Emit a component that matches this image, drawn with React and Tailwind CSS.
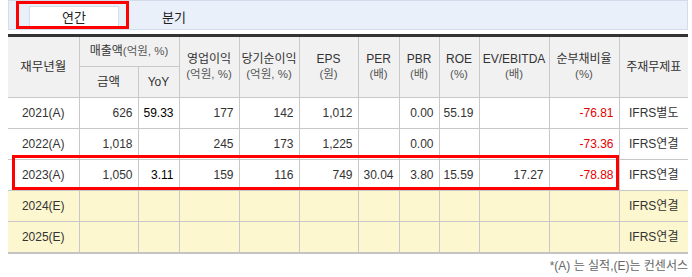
import React from "react";

const widths = [71, 59, 41, 60, 60, 59, 41, 40, 40, 70, 70, 69];

const rows = [
  { y: "2021(A)", v: ["626", "59.33", "177", "142", "1,012", "", "0.00", "55.19", "", "-76.81"], s: "IFRS별도" },
  { y: "2022(A)", v: ["1,018", "", "245", "173", "1,225", "", "0.00", "", "", "-73.36"], s: "IFRS연결" },
  { y: "2023(A)", v: ["1,050", "3.11", "159", "116", "749", "30.04", "3.80", "15.59", "17.27", "-78.88"], s: "IFRS연결", hl: true },
  { y: "2024(E)", v: ["", "", "", "", "", "", "", "", "", ""], s: "IFRS연결", est: true },
  { y: "2025(E)", v: ["", "", "", "", "", "", "", "", "", ""], s: "IFRS연결", est: true },
];

const font = { fontFamily: "'Liberation Sans', 'Noto Sans CJK KR', sans-serif" };

function H2({ a, b }) {
  return (
    <th rowSpan={2} className="border border-[#c8c8c8] font-normal text-[12px] leading-[15px] text-[#333] align-middle text-center px-0 whitespace-nowrap">
      <div>{a}</div>
      <div className="text-[11.5px] text-[#555]">{b}</div>
    </th>
  );
}

export default function App() {
  return (
    <div className="w-[692px] h-[277px] bg-white relative" style={font}>
      <div className="ml-[8px] w-[680px] h-[30px] bg-[#e9f0fa] border border-[#d3dcea] flex items-end pl-[20px] gap-[10px] relative">
        <div className="w-[90px] h-[23px] bg-white border-l border-t border-r border-[#d3dcea] flex items-center justify-center text-[13px] text-[#222]">연간</div>
        <div className="w-[90px] h-[23px] flex items-center justify-center text-[13px] text-[#222]">분기</div>
        <div className="absolute left-[7px] top-0 w-[113px] h-[28px] border-[3px] border-[#f00]" />
      </div>
      <div className="relative mt-[4px] ml-[8px] w-[680px]">
        <table className="table-fixed border-collapse w-[680px] border-t-[3px] border-t-[#333] border-b-2 border-b-[#c4c4c4]">
          <colgroup>
            {widths.map((w, i) => (
              <col key={i} style={{ width: w }} />
            ))}
          </colgroup>
          <thead className="bg-[#f1f1f1]">
            <tr className="h-[31px]">
              <th rowSpan={2} className="border-b border-r border-[#c8c8c8] font-normal text-[12.5px] text-[#333]">재무년월</th>
              <th colSpan={2} className="border border-[#c8c8c8] font-normal text-[12px] text-[#333] whitespace-nowrap">
                매출액<span className="text-[11.5px] text-[#555]">(억원, %)</span>
              </th>
              <H2 a="영업이익" b="(억원, %)" />
              <H2 a="당기순이익" b="(억원, %)" />
              <H2 a="EPS" b="(원)" />
              <H2 a="PER" b="(배)" />
              <H2 a="PBR" b="(배)" />
              <H2 a="ROE" b="(%)" />
              <H2 a="EV/EBITDA" b="(배)" />
              <H2 a="순부채비율" b="(%)" />
              <th rowSpan={2} className="border-b border-l border-[#c8c8c8] font-normal text-[12px] text-[#333] whitespace-nowrap">주재무제표</th>
            </tr>
            <tr className="h-[31px]">
              <th className="border border-[#c8c8c8] font-normal text-[12.5px] text-[#333]">금액</th>
              <th className="border border-[#c8c8c8] font-normal text-[12px] text-[#333]">YoY</th>
            </tr>
          </thead>
          <tbody>
            {rows.map((r, ri) => (
              <tr key={ri} className={"h-[31px] " + (r.est ? "bg-[#fdf7d0]" : "bg-white")}>
                <td className="border-t border-r border-[#c8c8c8] text-center text-[12px] text-[#333]">{r.y}</td>
                {r.v.map((v, i) => (
                  <td
                    key={i}
                    className={
                      "border border-[#c8c8c8] text-right pr-[5px] text-[12px] " +
                      (i === 9 ? "text-[#e60000]" : i === 1 ? "text-black" : "text-[#333]")
                    }
                  >
                    {v}
                  </td>
                ))}
                <td className="border-t border-l border-[#c8c8c8] text-center text-[12px] text-[#333] whitespace-nowrap">{r.s}</td>
              </tr>
            ))}
          </tbody>
        </table>
        <div className="absolute left-[4px] top-[121px] w-[607px] h-[35px] border-[3px] border-[#f00] pointer-events-none" />
      </div>
      <div className="w-[688px] text-right text-[12px] text-[#666] mt-[5px] leading-[14px]">*(A) 는 실적,(E)는 컨센서스</div>
    </div>
  );
}
